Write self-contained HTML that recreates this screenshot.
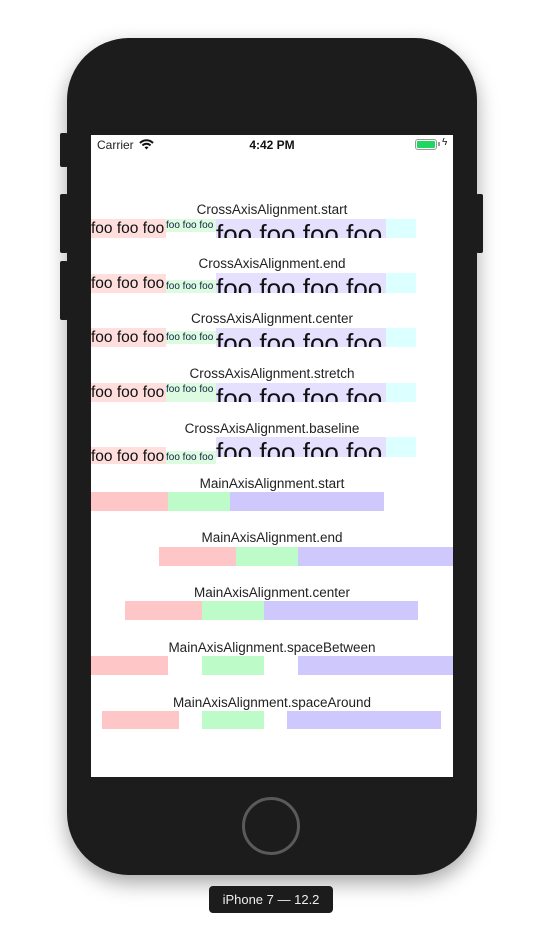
<!DOCTYPE html>
<html><head><meta charset="utf-8"><style>
*{margin:0;padding:0;box-sizing:border-box}
body{width:544px;height:950px;background:#fff;position:relative;overflow:hidden;font-family:"Liberation Sans",sans-serif}
.a{position:absolute}
.phone{left:67px;top:38px;width:410px;height:837px;background:#1c1c1c;border-radius:62px;box-shadow:0 8px 20px rgba(0,0,0,.35)}
.btn{background:#1c1c1c;border-radius:2px}
.screen{left:91px;top:135px;width:362px;height:642px;background:#fff;overflow:hidden}
.t{position:absolute;left:0;width:362px;text-align:center;font-size:13.5px;color:#222;line-height:16px}
.b{position:absolute;overflow:hidden;white-space:nowrap;color:#111}
.r{background:#ffdede}.g{background:#dcfbe0}.p{background:#e6e0ff}.c{background:#dcffff}
.R{background:#ffc6c8}.G{background:#bdfcc8}.P{background:#cfc8fc}
.s15{font-size:15.5px;line-height:19px}
.s10{font-size:10px;line-height:13px;color:#124}
.s26{font-size:26px;line-height:30px}
</style></head><body>
<div class="a phone"></div>
<div class="a btn" style="left:60px;top:133px;width:8px;height:34px"></div>
<div class="a btn" style="left:60px;top:194px;width:8px;height:59px"></div>
<div class="a btn" style="left:60px;top:261px;width:8px;height:59px"></div>
<div class="a btn" style="left:476px;top:194px;width:7px;height:59px"></div>
<div class="a" style="left:242px;top:797px;width:58px;height:58px;border:3px solid #5a5a5a;border-radius:50%"></div>
<div class="a" style="left:209px;top:886px;width:124px;height:27px;background:#1c1c1c;border-radius:4px;color:#eee;font-size:13px;text-align:center;line-height:27px">iPhone 7 — 12.2</div>
<div class="a screen">
 <div class="a" style="left:6px;top:3px;font-size:12px;color:#222">Carrier</div>
 <svg class="a" style="left:48px;top:4px" width="15" height="11" viewBox="0 0 15 11"><path d="M1 4 A9 9 0 0 1 14 4" stroke="#111" stroke-width="2" fill="none"/><path d="M3.5 6.5 A5.5 5.5 0 0 1 11.5 6.5" stroke="#111" stroke-width="2" fill="none"/><path d="M7.5 10.5 L5.5 8.3 A3 3 0 0 1 9.5 8.3Z" fill="#111"/></svg>
 <div class="a" style="left:0;width:362px;text-align:center;top:3px;font-size:12px;font-weight:bold;color:#111">4:42 PM</div>
 <div class="a" style="left:324px;top:4px;width:22px;height:11px;border:1px solid #999;border-radius:3px;padding:1px"><div style="width:100%;height:100%;background:#1fd760;border-radius:1px"></div></div>
 <div class="a" style="left:347px;top:7px;width:2px;height:4px;background:#999"></div>
 <div class="a" style="left:351px;top:2px;font-size:10px;color:#111">ϟ</div>

 <div class="t" style="top:67px">CrossAxisAlignment.start</div>
 <div class="b r s15" style="left:0;top:84px;width:75px;height:19px">foo foo foo</div>
 <div class="b g s10" style="left:75px;top:84px;width:50px;height:13px">foo foo foo</div>
 <div class="b p s26" style="left:125px;top:84px;width:170px;height:19px">foo foo foo foo</div>
 <div class="b c" style="left:295px;top:84px;width:30px;height:19px"></div>

 <div class="t" style="top:121px">CrossAxisAlignment.end</div>
 <div class="b r s15" style="left:0;top:139px;width:75px;height:19px">foo foo foo</div>
 <div class="b g s10" style="left:75px;top:145px;width:50px;height:13px">foo foo foo</div>
 <div class="b p s26" style="left:125px;top:138px;width:170px;height:20px">foo foo foo foo</div>
 <div class="b c" style="left:295px;top:138px;width:30px;height:20px"></div>

 <div class="t" style="top:176px">CrossAxisAlignment.center</div>
 <div class="b r s15" style="left:0;top:193px;width:75px;height:19px">foo foo foo</div>
 <div class="b g s10" style="left:75px;top:196px;width:50px;height:13px">foo foo foo</div>
 <div class="b p s26" style="left:125px;top:193px;width:170px;height:19px">foo foo foo foo</div>
 <div class="b c" style="left:295px;top:193px;width:30px;height:19px"></div>

 <div class="t" style="top:231px">CrossAxisAlignment.stretch</div>
 <div class="b r s15" style="left:0;top:248px;width:75px;height:19px">foo foo foo</div>
 <div class="b g s10" style="left:75px;top:248px;width:50px;height:19px">foo foo foo</div>
 <div class="b p s26" style="left:125px;top:248px;width:170px;height:19px">foo foo foo foo</div>
 <div class="b c" style="left:295px;top:248px;width:30px;height:19px"></div>

 <div class="t" style="top:286px">CrossAxisAlignment.baseline</div>
 <div class="b r s15" style="left:0;top:312px;width:75px;height:17px">foo foo foo</div>
 <div class="b g s10" style="left:75px;top:316px;width:50px;height:13px">foo foo foo</div>
 <div class="b p s26" style="left:125px;top:302px;width:170px;height:20px">foo foo foo foo</div>
 <div class="b c" style="left:295px;top:302px;width:30px;height:20px"></div>

 <div class="t" style="top:341px">MainAxisAlignment.start</div>
 <div class="b R" style="left:0;top:357px;width:77px;height:19px"></div>
 <div class="b G" style="left:77px;top:357px;width:62px;height:19px"></div>
 <div class="b P" style="left:139px;top:357px;width:154px;height:19px"></div>

 <div class="t" style="top:395px">MainAxisAlignment.end</div>
 <div class="b R" style="left:68px;top:412px;width:77px;height:19px"></div>
 <div class="b G" style="left:145px;top:412px;width:62px;height:19px"></div>
 <div class="b P" style="left:207px;top:412px;width:155px;height:19px"></div>

 <div class="t" style="top:450px">MainAxisAlignment.center</div>
 <div class="b R" style="left:34px;top:466px;width:77px;height:19px"></div>
 <div class="b G" style="left:111px;top:466px;width:62px;height:19px"></div>
 <div class="b P" style="left:173px;top:466px;width:154px;height:19px"></div>

 <div class="t" style="top:505px">MainAxisAlignment.spaceBetween</div>
 <div class="b R" style="left:0;top:521px;width:77px;height:19px"></div>
 <div class="b G" style="left:111px;top:521px;width:62px;height:19px"></div>
 <div class="b P" style="left:207px;top:521px;width:155px;height:19px"></div>

 <div class="t" style="top:560px">MainAxisAlignment.spaceAround</div>
 <div class="b R" style="left:11px;top:576px;width:77px;height:18px"></div>
 <div class="b G" style="left:111px;top:576px;width:62px;height:18px"></div>
 <div class="b P" style="left:196px;top:576px;width:154px;height:18px"></div>
</div>
</body></html>
